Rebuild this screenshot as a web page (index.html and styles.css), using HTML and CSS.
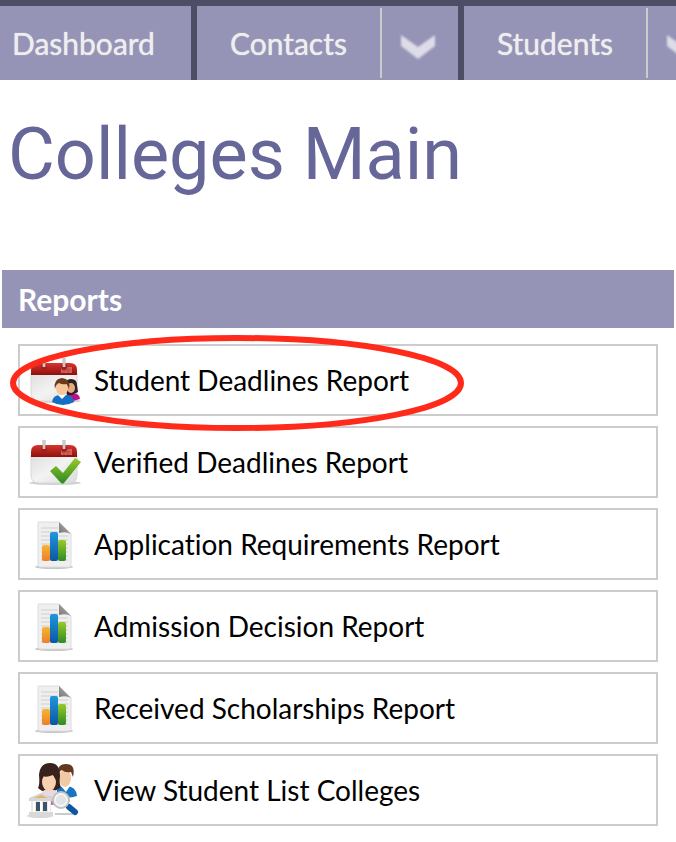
FILE: index.html
```html
<!DOCTYPE html>
<html lang="en">
<head>
  <meta charset="UTF-8">
  <meta name="viewport" content="width=device-width, initial-scale=1">
  <title>Colleges Main</title>
  <link rel="stylesheet" href="styles.css">
</head>
<body>

  <!-- shared icon shapes -->
  <svg class="defs" aria-hidden="true">
    <defs>
      <linearGradient id="red" x1="0" y1="0" x2="0" y2="1">
        <stop offset="0" stop-color="#d8352e"/>
        <stop offset="1" stop-color="#8c100e"/>
      </linearGradient>
      <linearGradient id="paper" x1="0" y1="0" x2="1" y2="1">
        <stop offset="0" stop-color="#dedede"/>
        <stop offset=".5" stop-color="#f3f3f3"/>
        <stop offset="1" stop-color="#dadada"/>
      </linearGradient>
      <linearGradient id="fold" x1="0" y1="1" x2="1" y2="0">
        <stop offset="0" stop-color="#777"/>
        <stop offset="1" stop-color="#b5b5b5"/>
      </linearGradient>
      <linearGradient id="orange" x1="0" y1="0" x2="0" y2="1">
        <stop offset="0" stop-color="#f6b62f"/>
        <stop offset="1" stop-color="#ee7d2b"/>
      </linearGradient>
      <linearGradient id="blue" x1="0" y1="0" x2="0" y2="1">
        <stop offset="0" stop-color="#1f97dc"/>
        <stop offset="1" stop-color="#0b57a4"/>
      </linearGradient>
      <linearGradient id="green" x1="0" y1="0" x2="0" y2="1">
        <stop offset="0" stop-color="#96cb26"/>
        <stop offset="1" stop-color="#2f8a26"/>
      </linearGradient>
      <symbol id="calendar" viewBox="0 0 70 68">
        <ellipse cx="35" cy="55" rx="26" ry="2" fill="#d0d0d0"/>
        <path d="M11 27h46v20q0 8-8 8H19q-8 0-8-8z" fill="url(#paper)" stroke="#d8d8d8"/>
        <path d="M11 29v-5q0-7 7-7h32q7 0 7 7v5z" fill="url(#red)"/>
        <path d="M41 21h11v6H41z" fill="#dc827c" opacity=".7"/>
        <path d="M42 24h9M44 21v6M48 21v6" stroke="#c1443f"/>
        <circle cx="24" cy="21" r="3" fill="#a51e1c"/>
        <circle cx="44" cy="21" r="3" fill="#a51e1c"/>
        <path d="M24 12v9M44 12v9" stroke="#b0b0b0" stroke-width="3"/>
        <path d="M24 12v9M44 12v9" stroke="#e7e7e7"/>
      </symbol>
      <symbol id="report" viewBox="0 0 70 68">
        <ellipse cx="34" cy="57" rx="19" ry="2" fill="#c6c6c6"/>
        <path d="M18 13q0-1 1-1h20l12 12v31q0 2-2 2H20q-2 0-2-2z" fill="#efefef" stroke="#dcdcdc"/>
        <path d="M21 18h17M21 22h17M21 26h27M21 30h27M21 34h27M21 38h27M21 42h27M21 46h27M21 50h27" stroke="#cfcfcf"/>
        <path d="M39 12l12 12q-5-3-12-1z" fill="url(#fold)"/>
        <rect x="22" y="35" width="8" height="16" rx="2" fill="url(#orange)"/>
        <rect x="30" y="22" width="8" height="29" rx="2" fill="url(#blue)"/>
        <rect x="38" y="30" width="8" height="21" rx="2" fill="url(#green)"/>
      </symbol>
    </defs>
  </svg>

  <nav class="navbar">
    <div class="nav-item nav-home"><a href="#">Dashboard</a></div>
    <div class="nav-item">
      <a href="#">Contacts</a>
      <button class="nav-more" aria-label="More contacts">
        <svg width="36" height="28" viewBox="0 0 36 28"><path d="M1 2l17 12L35 2v11L18 26 1 13z"/></svg>
      </button>
    </div>
    <div class="nav-item">
      <a href="#">Students</a>
      <button class="nav-more" aria-label="More students">
        <svg width="36" height="28" viewBox="0 0 36 28"><path d="M1 2l17 12L35 2v11L18 26 1 13z"/></svg>
      </button>
    </div>
  </nav>

  <h1>Colleges Main</h1>

  <section class="panel">
    <h2>Reports</h2>
    <ul class="reports">
      <li class="highlighted">
        <a href="#">
          <svg class="icon" viewBox="0 0 70 68" aria-hidden="true">
            <use href="#calendar"/>
            <path d="M46 53q0-6 5-6 9 0 9 6l-7 2z" fill="#b5128b"/>
            <path d="M45 39q0-6 6-6t6 6l1 7-6 3h-5z" fill="#30201f"/>
            <ellipse cx="51" cy="42" rx="4" ry="5" fill="#e6aa82"/>
            <path d="M32 56q1-7 8-7h6q7 0 8 7-5 3-11 3t-11-3z" fill="#1570c4"/>
            <path d="M38 49h8l-4 4z" fill="#fff"/>
            <ellipse cx="42" cy="42" rx="6" ry="7" fill="#f5c69a"/>
            <path d="M35 43q-2-10 7-11 9 1 7 11l-2-5q-5 1-8-1-3 1-4 6z" fill="#6b3a1d"/>
          </svg>
          <span>Student Deadlines Report</span>
        </a>
        <svg class="ring" viewBox="0 0 454 96" preserveAspectRatio="none" aria-hidden="true">
          <ellipse cx="227" cy="48" rx="224" ry="45"/>
        </svg>
      </li>
      <li>
        <a href="#">
          <svg class="icon" viewBox="0 0 70 68" aria-hidden="true">
            <use href="#calendar"/>
            <path d="M30 43l6-5 7 7 12-15 6 4-17 21q-1 1-3 0z" fill="url(#green)"/>
          </svg>
          <span>Verified Deadlines Report</span>
        </a>
      </li>
      <li>
        <a href="#">
          <svg class="icon" viewBox="0 0 70 68" aria-hidden="true"><use href="#report"/></svg>
          <span class="no-ligatures">Application Requirements Report</span>
        </a>
      </li>
      <li>
        <a href="#">
          <svg class="icon" viewBox="0 0 70 68" aria-hidden="true"><use href="#report"/></svg>
          <span>Admission Decision Report</span>
        </a>
      </li>
      <li>
        <a href="#">
          <svg class="icon" viewBox="0 0 70 68" aria-hidden="true"><use href="#report"/></svg>
          <span>Received Scholarships Report</span>
        </a>
      </li>
      <li>
        <a href="#">
          <svg class="icon" viewBox="0 0 70 68" aria-hidden="true">
            <path d="M37 40v-6q2-4 9-4 10 0 11 10-9 3-20 0z" fill="#1676c4"/>
            <path d="M41 30h9l-4 6z" fill="#fff"/>
            <ellipse cx="45" cy="22" rx="6" ry="9" fill="#f2c9a5"/>
            <path d="M38 20q-2-12 8-12t7 13l-2-5q-6 1-9-2-3 1-4 6z" fill="#633921"/>
            <path d="M18 32q2-4 1-13 1-12 11-12t10 13q-1 8 1 11-5 5-11 4-7 2-12-3z" fill="#38221c"/>
            <path d="M21 38q2-5 8-5 8 0 10 6v9H26z" fill="#e9d8df"/>
            <path d="M29 40l5 3v6h-5z" fill="#c76aa9"/>
            <ellipse cx="29" cy="26" rx="7" ry="9" fill="#f8d2b0"/>
            <path d="M21 25q0-10 8-12 6 3 8 13l-4-7q-7 3-10 1z" fill="#38221c"/>
            <ellipse cx="20" cy="60" rx="13" ry="2" fill="#d8d8d8"/>
            <path d="M9 42l12-5 12 5v3H9z" fill="#d6d6d6"/>
            <path d="M14 42l7-3 7 3z" fill="#e5b266"/>
            <path d="M11 45h20v11H11z" fill="#edeae5"/>
            <path d="M16 46h4v9h-4zM23 46h4v9h-4z" fill="#385570"/>
            <path d="M14 45v11M21 45v11M29 45v11" stroke="#fff" stroke-width="2"/>
            <path d="M9 56h24v4H9z" fill="#d9d9d9"/>
            <path d="M35 58h18" stroke="#ccc" stroke-width="2"/>
            <path d="M49 51l6 5" stroke="#0f56a1" stroke-width="6" stroke-linecap="round"/>
            <circle cx="41" cy="44" r="8" fill="#f4f5f5" stroke="#bfc2c4" stroke-width="2"/>
            <circle cx="41" cy="44" r="5" fill="#e0e4e5"/>
          </svg>
          <span>View Student List Colleges</span>
        </a>
      </li>
    </ul>
  </section>

</body>
</html>
```
FILE: styles.css
```css
body {
  margin: 0;
  font-family: Lato, sans-serif;
  font-size: 28px;
  background: #fff;
  overflow-x: hidden;
}
a {
  color: inherit;
  text-decoration: none;
}
.defs {
  position: absolute;
  width: 0;
  height: 0;
}
.navbar {
  display: flex;
  gap: 6px;
  height: 74px;
  padding-top: 6px;
  background: #4e4d66;
  overflow: hidden;
}
.nav-item {
  display: flex;
  flex-shrink: 0;
  background: #9594b7;
  color: #eee;
  font-size: 30px;
  text-shadow: 0 0 1px #eee;
}
.nav-item a {
  padding: 0 33px;
  line-height: 74px;
}
.nav-home a {
  padding: 0 36px 0 12px;
}
.nav-more {
  display: flex;
  align-items: center;
  width: 78px;
  margin: 2px 0;
  padding: 8px 0 0 18px;
  border: none;
  border-left: 2px solid #ccc;
  background: none;
  cursor: pointer;
}
.nav-more svg {
  fill: #dddce8;
  filter: blur(1px);
}
h1 {
  margin: 32px 8px 72px;
  font: 400 72px/86px Roboto, sans-serif;
  color: #666699;
}
.panel {
  margin: 0 2px;
}
h2 {
  margin: 0;
  padding: 0 16px;
  font-size: 30px;
  line-height: 58px;
  background: #9594b7;
  color: #fff;
}
.reports {
  display: flex;
  flex-direction: column;
  gap: 10px;
  margin: 0;
  padding: 16px;
  list-style: none;
}
.reports li {
  position: relative;
  border: 2px solid #ccc;
}
.reports .highlighted {
  z-index: 1;
}
.reports a {
  display: flex;
  align-items: center;
  gap: 4px;
  height: 68px;
  color: #000;
}
.no-ligatures {
  font-variant-ligatures: none;
}
.icon {
  width: 70px;
  height: 68px;
}
/* red ring round the first report */
.ring {
  position: absolute;
  left: -10px;
  top: -11px;
  width: 454px;
  height: 96px;
  pointer-events: none;
}
.ring ellipse {
  fill: none;
  stroke: #ff2a1a;
  stroke-width: 6px;
}
```
